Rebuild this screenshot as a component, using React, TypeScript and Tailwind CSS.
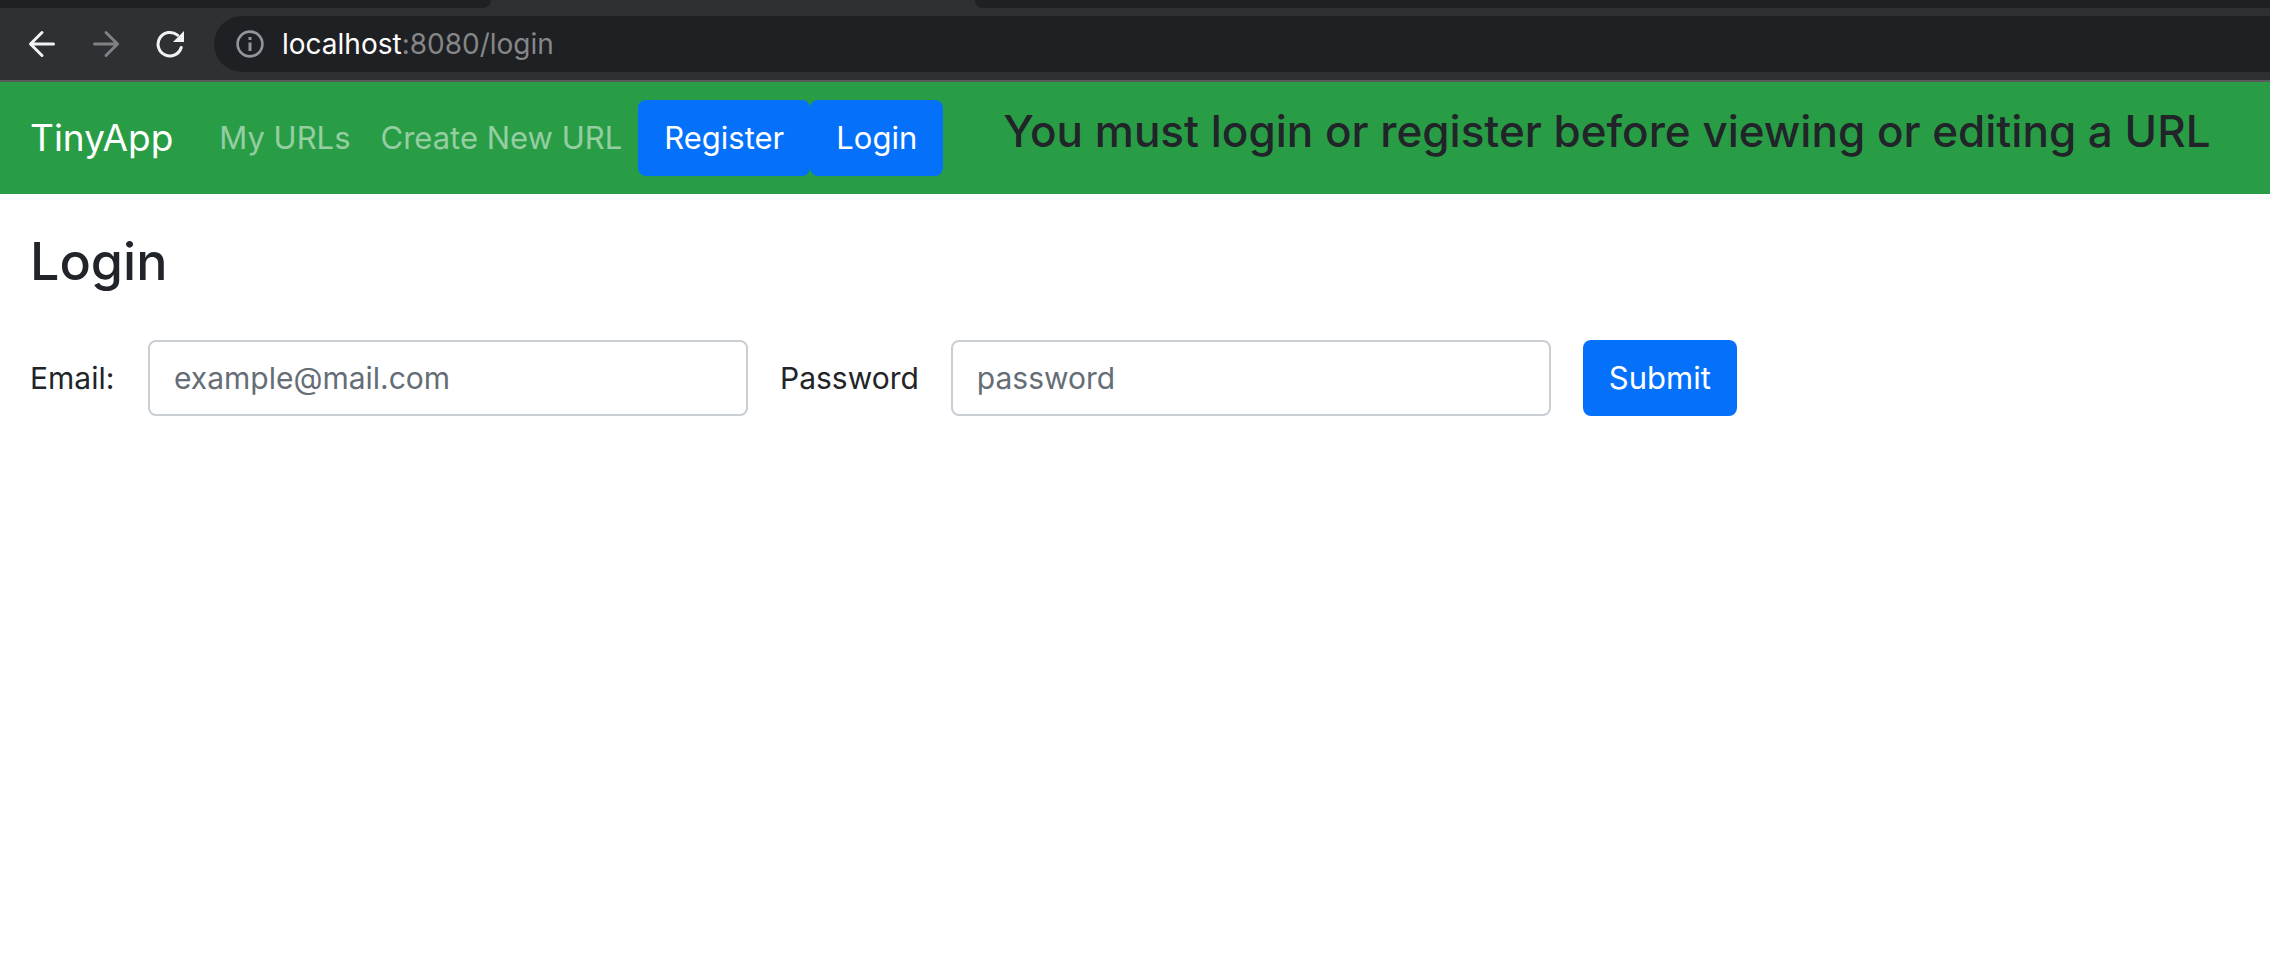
import React from "react";

function BackIcon() {
  return (
    <svg viewBox="0 0 28 30" className="h-[30px] w-7" fill="none" stroke="currentColor" strokeWidth="3">
      <path d="M25.5 15H3M14 3.5L2.5 15L14 26.5" strokeLinecap="round" strokeLinejoin="round" />
    </svg>
  );
}

function ForwardIcon() {
  return (
    <svg viewBox="0 0 28 30" className="h-[30px] w-7" fill="none" stroke="currentColor" strokeWidth="3">
      <path d="M2.5 15H25M14 3.5L25.5 15L14 26.5" strokeLinecap="round" strokeLinejoin="round" />
    </svg>
  );
}

function ReloadIcon() {
  return (
    <svg viewBox="0 0 28 28" className="h-7 w-7" fill="none" stroke="currentColor" strokeWidth="3">
      <path d="M25.2 17.5A11.8 11.8 0 1 1 21.5 5.2" strokeLinecap="round" />
      <path d="M28 1V12H17Z" fill="currentColor" stroke="none" />
    </svg>
  );
}

function InfoIcon() {
  return (
    <svg viewBox="0 0 28 28" className="h-7 w-7 shrink-0 text-[#8f979c]" fill="none" stroke="currentColor">
      <circle cx="14" cy="14" r="12.4" strokeWidth="2.6" />
      <path d="M14 12.5V21M14 7V10" strokeWidth="3" />
    </svg>
  );
}

function BrowserBar() {
  return (
    <header className="border-b-2 border-[#5a5a5d] bg-[#2f3034]">
      <div className="flex h-2">
        <div className="w-[491px] rounded-br-2xl bg-[#1f2023]" />
        <div className="w-[484px]" />
        <div className="flex-1 rounded-bl-2xl bg-[#1f2023]" />
      </div>
      <div className="flex items-center py-2 pl-7">
        <div className="flex items-center gap-9 text-[#f1f3f4]">
          <button type="button" aria-label="Back"><BackIcon /></button>
          <button type="button" aria-label="Forward" className="text-[#808185]"><ForwardIcon /></button>
          <button type="button" aria-label="Reload"><ReloadIcon /></button>
        </div>
        <div className="ml-[30px] flex h-14 flex-1 items-center rounded-l-full bg-[#1f2023] pl-[22px] text-[28px]">
          <InfoIcon />
          <p className="pl-[18px] text-[#858688]">
            <span className="text-white">localhost</span>:8080/login
          </p>
        </div>
      </div>
    </header>
  );
}

const button = "flex h-[76px] items-center rounded-lg bg-[#0571fb] px-[26px] text-[31px] text-white";

function NavBar() {
  return (
    <nav className="flex items-center bg-[#299d45] px-[30px] py-[18px] text-[31px] whitespace-nowrap">
      <a href="#" className="text-[37px] leading-[60px] text-white">TinyApp</a>
      <a href="#" className="pl-[46px] text-white/50">My URLs</a>
      <a href="#" className="pl-[30px] text-white/50">Create New URL</a>
      <div className="flex pl-4">
        <button type="button" className={button}>Register</button>
        <button type="button" className={button}>Login</button>
      </div>
      <h3 className="pb-[14px] pl-[60px] text-[44px] leading-[58px] font-medium">
        You must login or register before viewing or editing a URL
      </h3>
    </nav>
  );
}

const field =
  "h-[76px] w-[600px] rounded-lg border-2 border-[#c9cfd5] bg-white px-6 text-[#212429] placeholder:text-[#656d75]";

function LoginForm() {
  return (
    <main className="px-[30px] pt-[34px]">
      <h1 className="text-[52px] leading-[68px] font-medium">Login</h1>
      <form className="flex items-center gap-8 pt-11" onSubmit={(e) => e.preventDefault()}>
        <label htmlFor="email" className="min-w-[86px]">Email:</label>
        <input id="email" type="email" placeholder="example@mail.com" className={field} />
        <label htmlFor="password">Password</label>
        <input id="password" type="password" placeholder="password" className={field} />
        <button type="submit" className={button}>Submit</button>
      </form>
    </main>
  );
}

export default function App() {
  return (
    <div className="min-h-screen bg-white font-['Inter','Liberation_Sans',sans-serif] text-[30px] leading-[48px] text-[#212429]">
      <BrowserBar />
      <NavBar />
      <LoginForm />
    </div>
  );
}
